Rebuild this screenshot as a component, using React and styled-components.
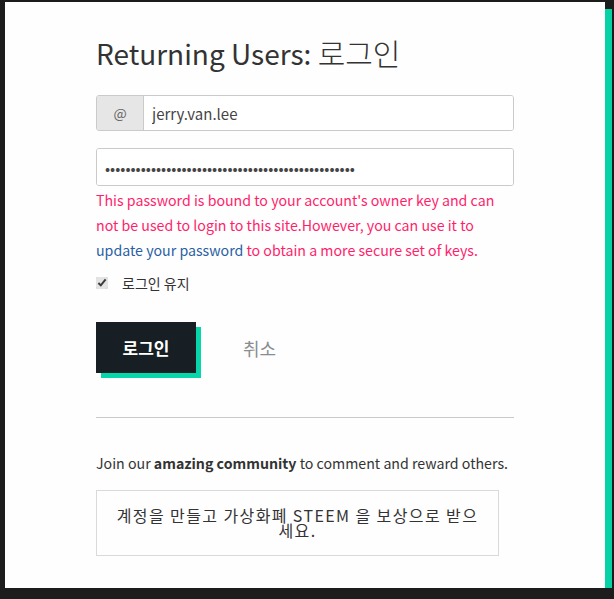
import React from "react";
import styled, { createGlobalStyle } from "styled-components";

const GlobalStyle = createGlobalStyle`
  html, body {
    margin: 0;
    padding: 0;
    background: #1c1c1c;
  }
  body {
    font-family: "Noto Sans CJK KR", "Noto Sans", sans-serif;
    color: #333;
  }
`;

const Modal = styled.div`
  box-sizing: border-box;
  margin: 2px 0 0 5px;
  width: 600px;
  height: 586px;
  background: #fefefe;
  box-shadow: 7px 7px 0 #06d2a6;
  padding: 29px 91px 0 91px;
`;

const Title = styled.h1`
  margin: 0 0 20px;
  font-size: 28px;
  font-weight: 400;
  color: #333;
  line-height: 44px;
  height: 44px;
`;

const Hangul = styled.span`
  font-size: 30px;
  font-weight: 300;
  line-height: 1;
`;

const InputGroup = styled.div`
  display: flex;
  height: 36px;
  border: 1px solid #cacaca;
  border-radius: 3px;
  box-sizing: border-box;
  overflow: hidden;
`;

const Addon = styled.span`
  width: 46px;
  display: flex;
  align-items: center;
  justify-content: center;
  background: #e6e6e6;
  border-right: 1px solid #cacaca;
  color: #666;
  font-size: 14px;
`;

const Field = styled.input`
  flex: 1;
  border: none;
  outline: none;
  padding: 0 8px;
  font-family: inherit;
  font-size: 15px;
  color: #444;
  background: #fff;
`;

const PasswordBox = styled(InputGroup)`
  margin-top: 17px;
  height: 38px;
`;

const ErrorText = styled.p`
  margin: 2px 0 0;
  font-size: 14.2px;
  line-height: 25px;
  color: #ff1f6b;
`;

const Link = styled.a`
  color: #2a5ea4;
  text-decoration: none;
`;

const Remember = styled.label`
  display: flex;
  align-items: center;
  gap: 14px;
  margin-top: 10px;
  font-size: 14px;
  color: #333;
`;

const Check = styled.input`
  margin: 0;
  width: 12px;
  height: 12px;
  accent-color: #e4e4e4;
`;

const Actions = styled.div`
  display: flex;
  align-items: center;
  gap: 47px;
  margin-top: 29px;
`;

const Primary = styled.button`
  width: 100px;
  height: 51px;
  border: none;
  background: #171f24;
  color: #fff;
  font-family: inherit;
  font-size: 17px;
  font-weight: 700;
  box-shadow: 5px 5px 0 #06d6a9;
  cursor: pointer;
`;

const Cancel = styled.button`
  border: none;
  background: none;
  padding: 0;
  color: #8a8d90;
  font-family: inherit;
  font-size: 18px;
  cursor: pointer;
`;

const Divider = styled.hr`
  margin: 44px 0 0;
  border: none;
  border-top: 1px solid #cacaca;
`;

const Join = styled.p`
  margin: 35px 0 0;
  font-size: 14.2px;
  color: #333;
`;

const SignUp = styled.div`
  box-sizing: border-box;
  margin-top: 17px;
  width: 403px;
  height: 66px;
  border: 1px solid #dadada;
  display: flex;
  align-items: center;
  justify-content: center;
  text-align: center;
  padding: 0 12px;
  font-size: 16px;
  letter-spacing: 1.4px;
  line-height: 15px;
  color: #333;
`;

export default function App() {
  return (
    <>
      <GlobalStyle />
      <Modal>
        <Title>
          Returning Users: <Hangul>로그인</Hangul>
        </Title>
        <InputGroup>
          <Addon>@</Addon>
          <Field type="text" defaultValue="jerry.van.lee" />
        </InputGroup>
        <PasswordBox>
          <Field type="password" defaultValue={"x".repeat(49)} />
        </PasswordBox>
        <ErrorText>
          This password is bound to your account's owner key and can not be
          used to login to this site.However, you can use it to{" "}
          <Link href="#">update your password</Link> to obtain a more secure
          set of keys.
        </ErrorText>
        <Remember>
          <Check type="checkbox" defaultChecked />
          로그인 유지
        </Remember>
        <Actions>
          <Primary>로그인</Primary>
          <Cancel>취소</Cancel>
        </Actions>
        <Divider />
        <Join>
          Join our <b>amazing community</b> to comment and reward others.
        </Join>
        <SignUp>계정을 만들고 가상화폐 STEEM 을 보상으로 받으세요.</SignUp>
      </Modal>
    </>
  );
}
